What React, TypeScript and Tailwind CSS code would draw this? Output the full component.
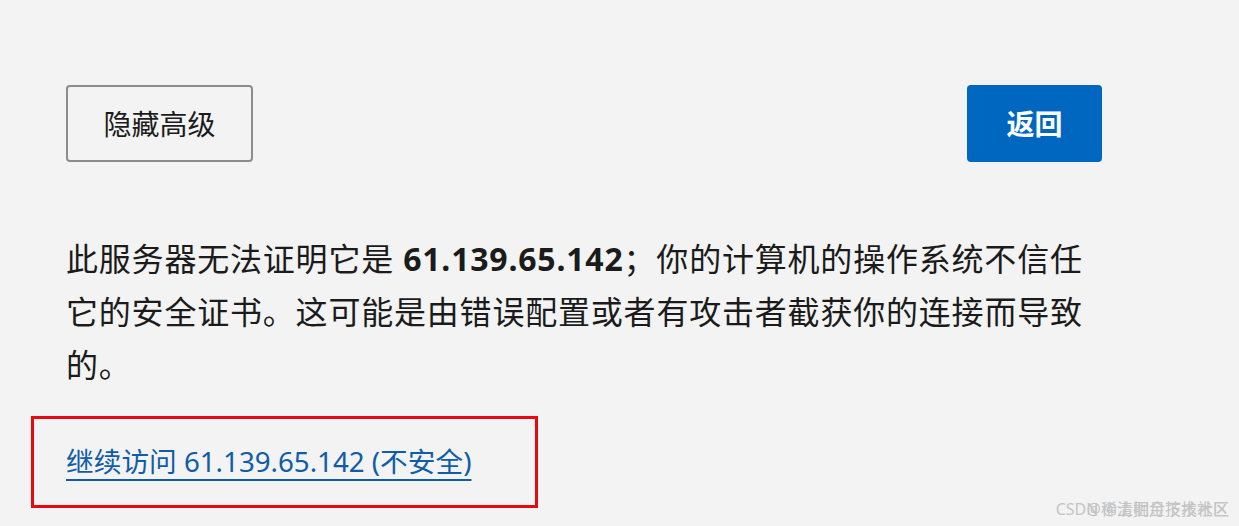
export default function App() {
  const font = { fontFamily: '"Noto Sans", "Noto Sans CJK SC", sans-serif' };
  return (
    <div className="relative w-[1239px] h-[526px] overflow-hidden bg-[#f3f3f3] text-[#1b1b1b]" style={font}>
      <div className="pl-[66px] pt-[85px]">
        <div className="flex justify-between items-start w-[1036px]">
          <button className="h-[77px] w-[187px] rounded-[4px] border-2 border-[#8c8c8c] bg-[#f3f3f3] text-[28px] leading-none text-[#1b1b1b]">
            隐藏高级
          </button>
          <button className="h-[77px] w-[135px] rounded-[4px] bg-[#0067c0] text-[28px] font-bold leading-none text-white">
            返回
          </button>
        </div>
        <p className="mt-[70px] w-[1030px] text-[32px] leading-[53px] tracking-[0.8px]">
          此服务器无法证明它是 <span className="font-bold">61.139.65.142</span>；你的计算机的操作系统不信任它的安全证书。这可能是由错误配置或者有攻击者截获你的连接而导致的。
        </p>
      </div>
      <div className="ml-[31px] mt-[25px] w-[507px] h-[92px] border-[3px] border-[#e8080f] flex items-center pl-[32px]">
        <a className="text-[27.7px] leading-none text-[#0f5ca8] underline underline-offset-[7px] decoration-2">
          继续访问 61.139.65.142 (不安全)
        </a>
      </div>
      <div className="absolute right-[10px] bottom-[9px] text-[16px] text-[#c4c4c4] leading-none">
        <span className="absolute right-0 bottom-0 whitespace-nowrap">CSDN @清明月下技术区</span>
        <span className="whitespace-nowrap">@稀土掘金技术社区</span>
      </div>
    </div>
  );
}
